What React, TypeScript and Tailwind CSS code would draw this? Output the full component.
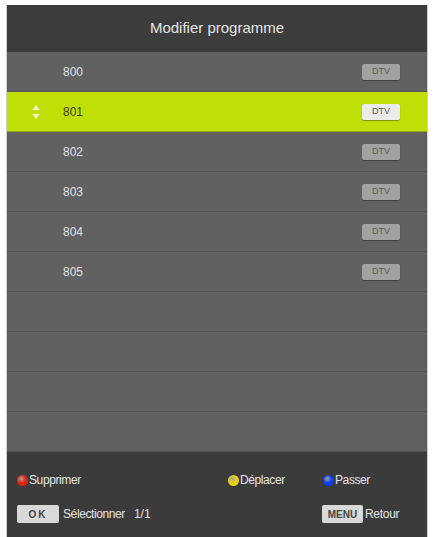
import React from "react";

const channels = ["800", "801", "802", "803", "804", "805"];
const selected = "801";

function Dot({ color }: { color: string }) {
  return (
    <span
      className="inline-block h-[11px] w-[11px] rounded-full"
      style={{ background: `radial-gradient(circle at 40% 35%, #fff8 0%, ${color} 45%, ${color} 100%)` }}
    />
  );
}

function Row({ num }: { num?: string }) {
  const active = num === selected;
  return (
    <div
      className={
        "flex h-[40px] items-center border-b " +
        (active ? "bg-[#c0df06] border-[#8fa800]" : "bg-[#616161] border-[#535353]")
      }
    >
      <div className="flex w-[56px] justify-center">
        {active && (
          <svg width="8" height="16" viewBox="0 0 8 16" className="ml-[2px]">
            <polygon points="4,1 7.5,6 0.5,6" fill="#f4f8d8" />
            <polygon points="4,15 7.5,10 0.5,10" fill="#f4f8d8" />
          </svg>
        )}
      </div>
      <div className={"flex-1 text-[12px] " + (active ? "text-[#3c4400]" : "text-[#e2e2e2]")}>{num}</div>
      {num && (
        <div
          className={
            "mr-[27px] flex h-[16px] w-[38px] items-center justify-center rounded-[2px] text-[9px] shadow-[0_1px_1px_rgba(0,0,0,0.35)] " +
            (active ? "bg-[#ececec] text-[#555]" : "bg-[#a2a2a2] text-[#5a5a5a]")
          }
        >
          DTV
        </div>
      )}
    </div>
  );
}

export default function App() {
  const rows: (string | undefined)[] = [...channels, undefined, undefined, undefined, undefined];
  return (
    <div className="h-[537px] w-[434px] bg-white pl-[6px] pr-[6px] pt-[5px]" style={{ fontFamily: '"Liberation Sans", Arial, sans-serif' }}>
      <div className="flex h-[532px] flex-col border-l border-r border-[#cfcfcf] bg-[#3c3c3c]">
        <div className="flex h-[47px] items-center justify-center text-[15px] text-[#e4e4e4]">Modifier programme</div>
        <div className="flex flex-col">
          {rows.map((r, i) => (
            <Row key={i} num={r} />
          ))}
        </div>
        <div className="flex flex-1 flex-col bg-[#3b3b3b] pl-[10px] pr-[24px] pt-[20px] text-[12px] text-[#e4e4e4]">
          <div className="flex h-[16px] items-center">
            <div className="flex w-[211px] items-center gap-[1px]">
              <Dot color="#e32212" />
              <span className="tracking-[-0.4px]">Supprimer</span>
            </div>
            <div className="flex w-[95px] items-center gap-[1px]">
              <Dot color="#ecd20a" />
              <span className="tracking-[-0.4px]">Déplacer</span>
            </div>
            <div className="flex items-center gap-[1px]">
              <Dot color="#0a3cf0" />
              <span className="tracking-[-0.4px]">Passer</span>
            </div>
          </div>
          <div className="mt-[17px] flex h-[18px] items-center">
            <div className="flex w-[305px] items-center">
              <div className="flex h-[18px] w-[42px] items-center justify-center rounded-[2px] bg-[#d9d9d9] text-[10px] font-bold tracking-[2px] text-[#444]">
                OK
              </div>
              <span className="ml-[4px] tracking-[-0.4px]">Sélectionner</span>
              <span className="ml-[9px]">1/1</span>
            </div>
            <div className="flex h-[18px] w-[41px] items-center justify-center rounded-[2px] bg-[#d9d9d9] text-[10px] font-bold text-[#444]">
              MENU
            </div>
            <span className="ml-[2px] tracking-[-0.3px]">Retour</span>
          </div>
        </div>
      </div>
    </div>
  );
}
